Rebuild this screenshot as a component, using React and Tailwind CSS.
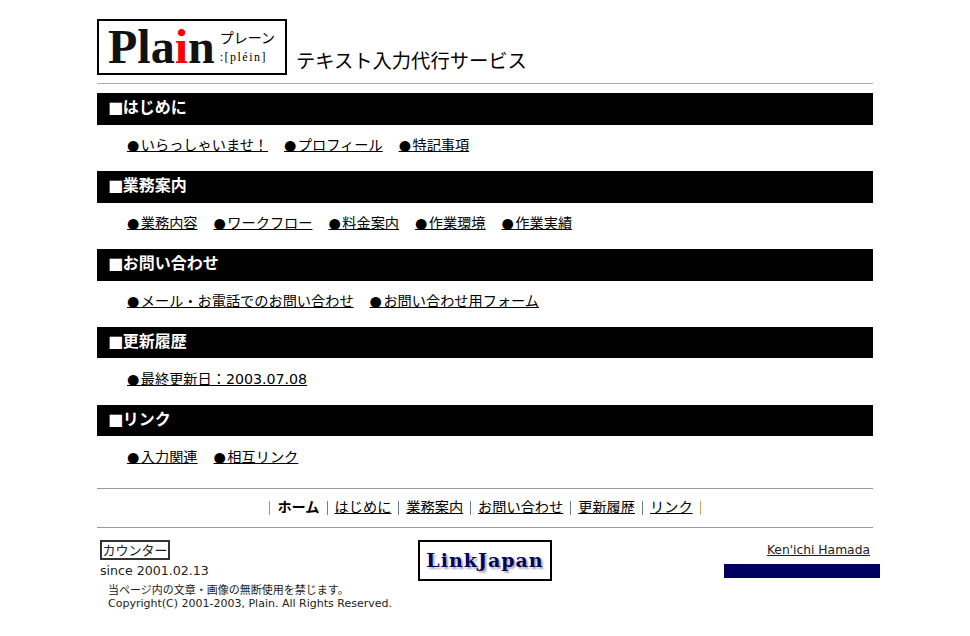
const sections = [
  { title: "はじめに", links: ["いらっしゃいませ！", "プロフィール", "特記事項"] },
  { title: "業務案内", links: ["業務内容", "ワークフロー", "料金案内", "作業環境", "作業実績"] },
  { title: "お問い合わせ", links: ["メール・お電話でのお問い合わせ", "お問い合わせ用フォーム"] },
  { title: "更新履歴", links: ["最終更新日：2003.07.08"], short: true },
  { title: "リンク", links: ["入力関連", "相互リンク"], short: true },
];

const navLinks = ["はじめに", "業務案内", "お問い合わせ", "更新履歴", "リンク"];

const font = "font-['DejaVu_Sans','Noto_Sans_CJK_JP',sans-serif]";
const cjk = "font-['Noto_Sans_CJK_JP',sans-serif]";

const Section = ({ title, links, short }) => (
  <div className="h-[78px]">
    <div className={`${short ? "h-[31px]" : "h-8"} bg-black pl-[11px] text-[16px] leading-[30px] font-bold text-white`}>
      <span className="tracking-[-0.3px]">■</span>{title}
    </div>
    <div className={`flex gap-4 pl-[30px] ${short ? "pt-[9px]" : "pt-2"} text-[14.2px] leading-6 text-black`}>
      {links.map((l) => (
        <a key={l} href="#" className="underline">
          <span className="tracking-[1.4px]">●</span>{l}
        </a>
      ))}
    </div>
  </div>
);

const Sep = ({ color }) => <span className={`mx-[7px] h-[14px] w-px ${color}`} />;

const App = () => {
  return (
    <div className={`h-[636px] w-[970px] overflow-hidden bg-white pl-[97px] pt-[19px] ${font}`}>
      <div className="w-[776px]">
        <div className="flex h-[56px] items-end">
          <div className="flex h-[56px] w-[190px] items-center border-2 border-black pl-[9px]">
            <div className="font-['Liberation_Serif',serif] text-[48px] leading-none font-bold text-[#111]">
              Pla<span className="text-[#f00]">i</span>n
            </div>
            <div className="ml-[5px] flex flex-col leading-[20px] text-black">
              <span className={`text-[14px] ${cjk}`}>プレーン</span>
              <span className="font-['Liberation_Serif',serif] text-[12px] tracking-[1.5px]">:[pléin]</span>
            </div>
          </div>
          <div className="mb-[1px] ml-[9px] text-[19.3px] leading-6 text-black">テキスト入力代行サービス</div>
        </div>
        <div className="mt-2 mb-[9px] h-px border-b border-[#aaa] bg-[#aaa]" />

        {sections.map((s) => (
          <Section key={s.title} title={s.title} links={s.links} short={s.short} />
        ))}

        <div className="mt-[5px] h-px bg-[#999]" />
        <div className="flex h-[38px] items-center justify-center text-[14.2px] text-black">
          <span className="mr-[7px] h-[14px] w-px bg-[#c98a5a]" />
          <span className="font-bold">ホーム</span>
          {navLinks.map((l) => (
            <span key={l} className="flex items-center">
              <Sep color="bg-[#6b7fa0]" />
              <a href="#" className="underline">{l}</a>
            </span>
          ))}
          <span className="ml-[7px] h-[14px] w-px bg-[#e0a070]" />
        </div>
        <div className="h-px bg-[#999]" />

        <div className="relative flex justify-between pt-[12px]">
          <div className="pl-[3px] text-[#222]">
            <div className="h-5 w-[70px] border-2 border-[#333] text-center text-[13px] leading-[17px] whitespace-nowrap">カウンター</div>
            <div className="mt-[2px] text-[12.6px] leading-[17px]">since 2001.02.13</div>
            <div className="mt-[5px] pl-2 text-[11px] leading-[13px]">
              <div>当ページ内の文章・画像の無断使用を禁じます。</div>
              <div>Copyright(C) 2001-2003, Plain. All Rights Reserved.</div>
            </div>
          </div>
          <div className="absolute top-[12px] left-[321px] flex h-[41px] w-[134px] items-center justify-center border-2 border-black font-['DejaVu_Serif',serif] text-[19px] font-bold tracking-[1px] text-[#000060] [text-shadow:2px_2px_2px_#aaa]">
            LinkJapan
          </div>
          <div className="mr-[-7px] flex w-[156px] flex-col items-end pt-[2px]">
            <a href="#" className="mr-[10px] text-[12.3px] leading-[17px] text-[#222] underline">Ken'ichi Hamada</a>
            <div className="mt-[5px] h-[14px] w-[156px] bg-[#000060]" />
          </div>
        </div>
      </div>
    </div>
  );
};

export default App;
